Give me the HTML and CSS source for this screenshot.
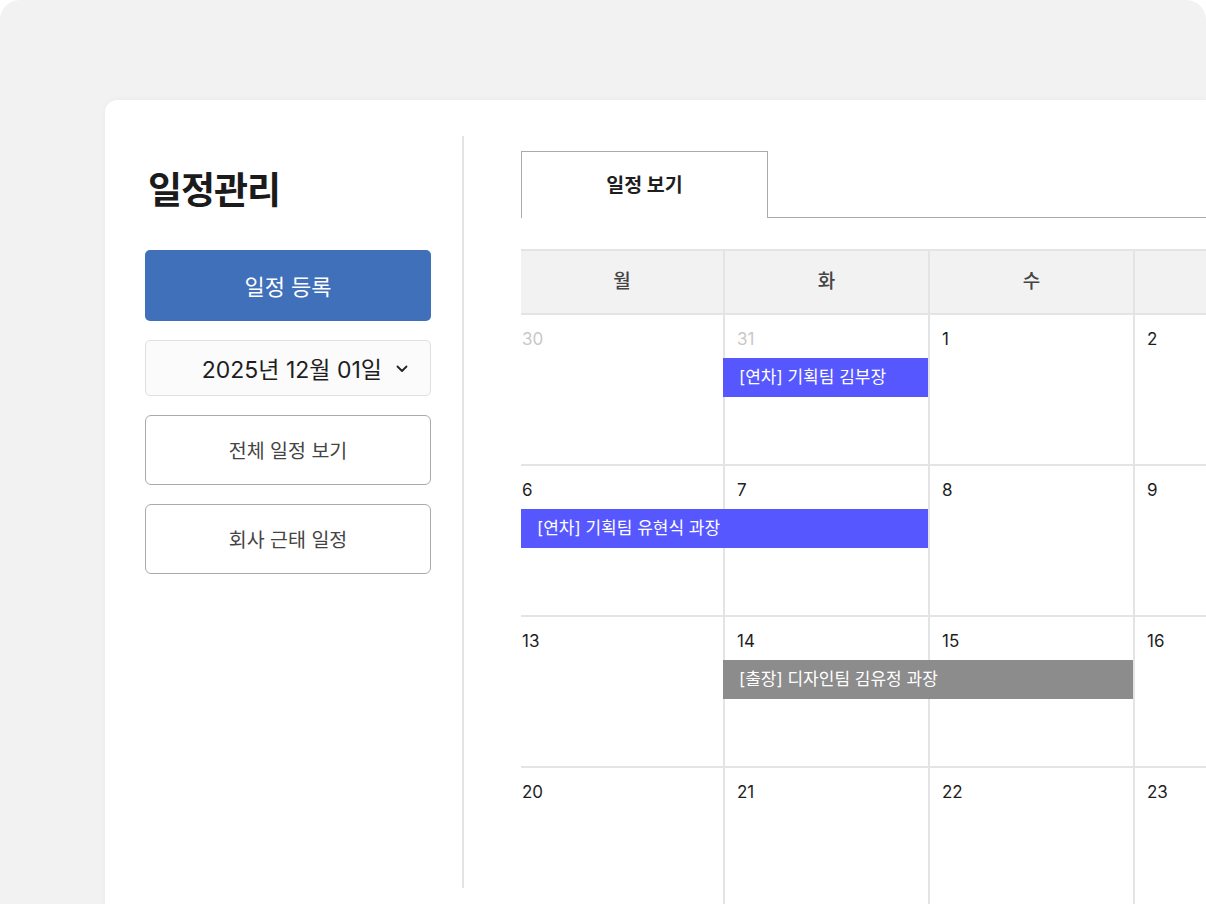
FILE: index.html
```html
<!DOCTYPE html>
<html lang="ko">
<head>
    <meta charset="UTF-8">
    <meta name="viewport" content="width=device-width, initial-scale=1.0">
    <title>일정관리</title>
    <link rel="stylesheet" href="styles.css">
</head>
<body>
    <div class="frame">
        <div class="card">
            <aside class="side">
                <h1 class="title">일정관리</h1>
                <button class="btn-main">일정 등록</button>
                <div class="date-pick">
                    <span>2025년 12월 01일</span>
                    <svg class="chev" width="12" height="8" viewBox="0 0 12 8"><path d="M1.5 1.5 L6 6 L10.5 1.5" fill="none" stroke="#222" stroke-width="1.8" stroke-linecap="round" stroke-linejoin="round"/></svg>
                </div>
                <button class="btn-line">전체 일정 보기</button>
                <button class="btn-line">회사 근태 일정</button>
            </aside>

            <main class="main">
                <div class="tabs">
                    <div class="tab active">일정 보기</div>
                    <div class="tab-rest"></div>
                </div>

                <div class="cal">
                    <div class="cal-head">
                        <div class="hd">월</div>
                        <div class="hd">화</div>
                        <div class="hd">수</div>
                        <div class="hd">목</div>
                        <div class="hd">금</div>
                        <div class="hd">토</div>
                        <div class="hd">일</div>
                    </div>

                    <div class="week">
                        <div class="day off">30</div>
                        <div class="day off">31</div>
                        <div class="day">1</div>
                        <div class="day">2</div>
                        <div class="day">3</div>
                        <div class="day">4</div>
                        <div class="day">5</div>
                        <div class="ev blue c2s1">[연차] 기획팀 김부장</div>
                    </div>

                    <div class="week">
                        <div class="day">6</div>
                        <div class="day">7</div>
                        <div class="day">8</div>
                        <div class="day">9</div>
                        <div class="day">10</div>
                        <div class="day">11</div>
                        <div class="day">12</div>
                        <div class="ev blue c1s2">[연차] 기획팀 유현식 과장</div>
                    </div>

                    <div class="week">
                        <div class="day">13</div>
                        <div class="day">14</div>
                        <div class="day">15</div>
                        <div class="day">16</div>
                        <div class="day">17</div>
                        <div class="day">18</div>
                        <div class="day">19</div>
                        <div class="ev gray c2s2">[출장] 디자인팀 김유정 과장</div>
                    </div>

                    <div class="week">
                        <div class="day">20</div>
                        <div class="day">21</div>
                        <div class="day">22</div>
                        <div class="day">23</div>
                        <div class="day">24</div>
                        <div class="day">25</div>
                        <div class="day">26</div>
                    </div>
                </div>
            </main>
        </div>
    </div>
</body>
</html>
```

FILE: styles.css
```css
html, body {
    margin: 0;
    padding: 0;
    height: 100%;
    overflow: hidden;
    background: #fff;
    font-family: "Inter", "Noto Sans CJK KR", sans-serif;
    color: #222;
}

.frame {
    height: 1000px;
    background: #f2f2f2;
    border-radius: 20px;
    padding: 100px 0 0 105px;
    box-sizing: border-box;
    overflow: hidden;
}

.card {
    display: flex;
    height: 900px;
    background: #fff;
    border-radius: 12px 0 0 0;
    padding-top: 36px;
    box-sizing: border-box;
    box-shadow: 0 0 6px rgba(0, 0, 0, 0.04);
}

/* 왼쪽 메뉴 */
.side {
    width: 359px;
    height: 752px;
    flex-shrink: 0;
    box-sizing: border-box;
    padding: 0 33px 0 40px;
    border-right: 2px solid #e4e4e4;
    display: flex;
    flex-direction: column;
}

.title {
    margin: 30px 0 34px 3px;
    font-size: 37px;
    font-weight: 700;
    letter-spacing: -1px;
    line-height: 50px;
    color: #1b1b1b;
}

.btn-main,
.btn-line {
    width: 286px;
    font-family: inherit;
    cursor: pointer;
}

.btn-main {
    height: 71px;
    border: 0;
    border-radius: 5px;
    background: #4070b9;
    color: #fff;
    font-size: 22px;
    padding-bottom: 2px;
}

.date-pick {
    margin-top: 19px;
    height: 56px;
    width: 286px;
    box-sizing: border-box;
    border: 1px solid #e0e0e0;
    border-radius: 5px;
    background: #fbfbfb;
    display: flex;
    align-items: center;
    justify-content: flex-end;
    gap: 14px;
    padding-right: 22px;
    font-size: 23px;
    color: #1e1e1e;
}

.chev { margin-top: 2px; }

.btn-line {
    margin-top: 19px;
    height: 70px;
    background: #fff;
    border: 1.5px solid #aaa;
    border-radius: 6px;
    color: #444;
    font-size: 19.5px;
    padding-bottom: 3px;
}

/* 오른쪽 달력 */
.main {
    flex: 1;
    min-width: 0;
    overflow: hidden;
    padding: 15px 0 0 57px;
}

.tabs {
    display: flex;
    height: 67px;
}

.tab {
    width: 247px;
    box-sizing: border-box;
    border: 1.5px solid #aaa;
    border-bottom: 0;
    display: flex;
    align-items: center;
    justify-content: center;
    font-size: 19.5px;
    font-weight: 700;
    color: #1e1e1e;
    padding-bottom: 3px;
}

.tab-rest {
    flex: 1;
    border-bottom: 1.5px solid #aaa;
}

.cal {
    margin-top: 31px;
    width: 1432px;
}

.cal-head,
.week {
    display: grid;
    grid-template-columns: 202px repeat(6, 205px);
}

.cal-head {
    height: 66px;
    background: #f2f2f2;
    border-top: 2px solid #e4e4e4;
    border-bottom: 2px solid #e4e4e4;
    box-sizing: border-box;
}

.hd {
    display: flex;
    align-items: center;
    justify-content: center;
    font-size: 19px;
    font-weight: 500;
    color: #444;
    border-left: 2px solid #e4e4e4;
    padding-bottom: 6px;
}
.hd:first-child { border-left: 0; }

.week {
    height: 151px;
    grid-template-rows: 43px 39px 1fr;
    border-bottom: 2px solid #e4e4e4;
    box-sizing: border-box;
}

.day {
    grid-row: 1 / 4;
    border-left: 2px solid #e4e4e4;
    padding: 12px 0 0 12px;
    font-size: 17px;
    line-height: 24px;
    color: #1e1e1e;
}
.day:nth-child(1) { grid-column: 1; border-left: 0; padding-left: 1px; }
.day:nth-child(2) { grid-column: 2; }
.day:nth-child(3) { grid-column: 3; }
.day:nth-child(4) { grid-column: 4; }
.day:nth-child(5) { grid-column: 5; }
.day:nth-child(6) { grid-column: 6; }
.day:nth-child(7) { grid-column: 7; }
.day.off { color: #c8c8c8; }

.ev {
    grid-row: 2;
    z-index: 1;
    padding-left: 16px;
    font-size: 17px;
    line-height: 39px;
    color: #fff;
    white-space: nowrap;
}
.ev.blue { background: #5757ff; }
.ev.gray { background: #8c8c8c; }

.c2s1 { grid-column: 2 / span 1; }
.c1s2 { grid-column: 1 / span 2; }
.c2s2 { grid-column: 2 / span 2; }
```
